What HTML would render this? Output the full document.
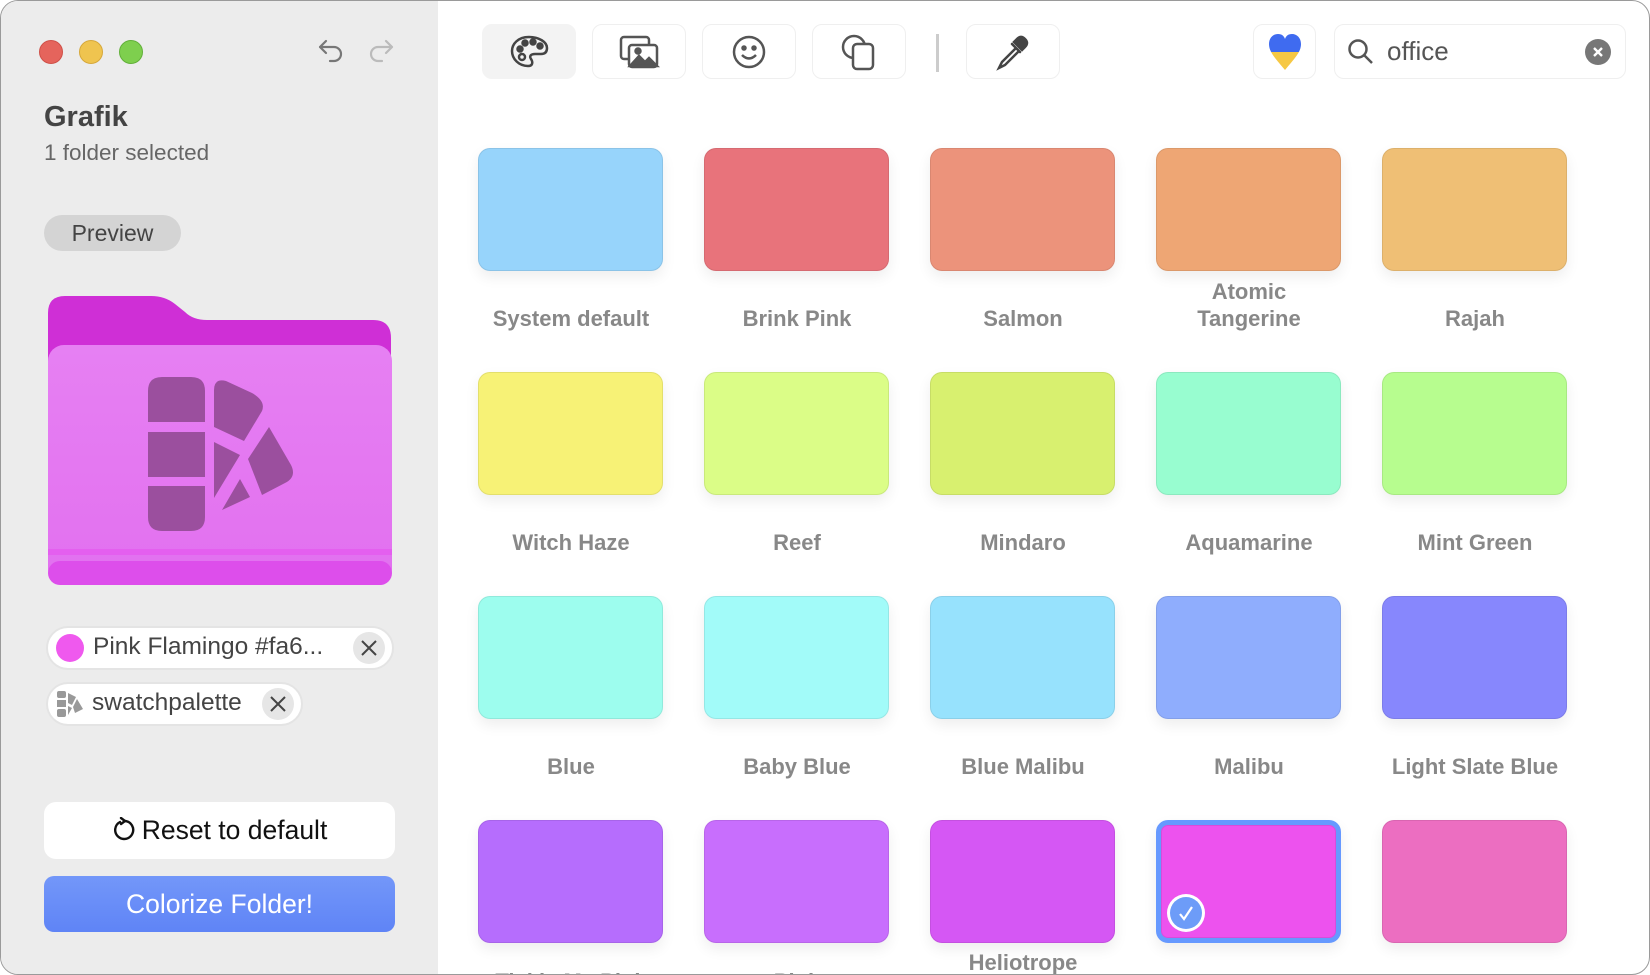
<!DOCTYPE html>
<html><head><meta charset="utf-8"><style>
*{margin:0;padding:0;box-sizing:border-box}
body{width:1650px;height:975px;overflow:hidden;background:#fff;font-family:"Liberation Sans",sans-serif;position:relative}
.win{position:absolute;left:0;top:0;width:1650px;height:975px;border:1.5px solid #9a9a9a;border-radius:18px;overflow:hidden;background:#fff}
.side{position:absolute;left:0;top:0;width:437px;height:100%;background:#ececec}
.a{position:absolute}
.tl{position:absolute;width:24px;height:24px;border-radius:50%;top:39px}
.tb{position:absolute;top:23px;height:55px;border:1.5px solid #efefef;border-radius:10px;background:#fff;display:flex;align-items:center;justify-content:center}
.sw{position:absolute;width:185px;height:123px;border-radius:12px;box-shadow:0 6px 14px rgba(0,0,0,.07),inset 0 0 0 1px rgba(0,0,0,.08)}
.lb{position:absolute;width:230px;text-align:center;font-weight:bold;font-size:22px;color:#888;line-height:27px}
.chip{position:absolute;height:44px;background:#fff;border:2px solid #e4e4e4;border-radius:22px}
.x{position:absolute;width:32px;height:32px;border-radius:50%;background:#e6e6e6;top:4px}
</style></head><body>
<div class="win">
<div class="side">
<div class="tl" style="left:38px;background:#e5645c;border:1px solid #cf5048"></div>
<div class="tl" style="left:78px;background:#efc44f;border:1px solid #d6a83a"></div>
<div class="tl" style="left:118px;background:#7ecf4e;border:1px solid #62b03a"></div>
<svg class="a" style="left:316px;top:36px" width="28" height="28" viewBox="0 0 28 28" fill="none" stroke="#777" stroke-width="2.2" stroke-linecap="round" stroke-linejoin="round"><path d="M9 4 3 10l6 6M3 10h14a7 7 0 0 1 0 14h-4"/></svg>
<svg class="a" style="left:366px;top:36px" width="28" height="28" viewBox="0 0 28 28" fill="none" stroke="#bbb" stroke-width="2.2" stroke-linecap="round" stroke-linejoin="round"><path d="M19 4l6 6-6 6M25 10H11a7 7 0 0 0 0 14h4"/></svg>
<div class="a" style="left:43px;top:100px;font-size:29px;font-weight:bold;color:#444">Grafik</div>
<div class="a" style="left:43px;top:139px;font-size:22.5px;color:#666">1 folder selected</div>
<div class="a" style="left:43px;top:214px;width:137px;height:36px;border-radius:18px;background:#d4d4d4;font-size:23px;color:#444;text-align:center;line-height:36px">Preview</div>
<svg class="a" style="left:44px;top:292px" width="350" height="295" viewBox="44 292 350 295">
<defs><linearGradient id="f" x1="0" y1="0" x2="0" y2="1"><stop offset="0" stop-color="#e680f3"/><stop offset="1" stop-color="#e270ef"/></linearGradient></defs>
<path d="M47 312q0-17 17-17h86q14 0 24 8l10 8q8 8 22 8h166q18 0 18 18v160H47z" fill="#cf2fd6"/>
<rect x="47" y="344" width="344" height="240" rx="16" fill="url(#f)"/>
<rect x="47" y="548" width="344" height="6" fill="#e45fef"/>
<rect x="47" y="560" width="344" height="24" rx="12" fill="#dd4eeb"/>
<g fill="#9b4f9e">
<path d="M147 390q0-14 14-14h29q14 0 14 14v31h-57z"/>
<rect x="147" y="431" width="57" height="45"/>
<path d="M147 485h57v31q0 14-14 14h-29q-14 0-14-14z"/>
<path d="M213 389q0-12 12-9l26 12q14 8 10 18l-18 30-30-14z"/>
<path d="M213 441l26 13-26 43z"/>
<path d="M268 426l22 38q6 12-6 18l-23 12-14-36z"/>
<path d="M239 478l10 18-28 13z"/>
</g></svg>
<div class="chip" style="left:45px;top:625px;width:348px">
<div class="a" style="left:8px;top:6px;width:28px;height:28px;border-radius:50%;background:#ef59ee"></div>
<div class="a" style="left:45px;top:5px;font-size:24.5px;color:#444">Pink Flamingo #fa6...</div>
<div class="x" style="left:305px"><svg width="32" height="32"><path d="M9 9l14 14M23 9 9 23" stroke="#444" stroke-width="2"/></svg></div>
</div>
<div class="chip" style="left:45px;top:681px;width:257px">
<svg class="a" style="left:8px;top:6px" width="28" height="28" viewBox="0 0 28 28" fill="#999"><rect x="1" y="1" width="9" height="7" rx="2"/><rect x="1" y="10" width="9" height="7"/><rect x="1" y="19" width="9" height="8" rx="2"/><path d="M12 3l8 4-4 8-4-2zM12 16l4 2-4 7zM21 9l6 10-8 4-2-6z"/></svg>
<div class="a" style="left:44px;top:5px;font-size:24.5px;color:#444">swatchpalette</div>
<div class="x" style="left:214px"><svg width="32" height="32"><path d="M9 9l14 14M23 9 9 23" stroke="#444" stroke-width="2"/></svg></div>
</div>
<div class="a" style="left:43px;top:801px;width:351px;height:57px;background:#fff;border-radius:12px;font-size:26.5px;color:#111;text-align:center;line-height:57px"><svg style="vertical-align:-4px;margin-right:6px" width="24" height="26" viewBox="0 0 24 26" fill="none" stroke="#111" stroke-width="2.4" stroke-linecap="round"><path d="M8 5a9 9 0 1 0 5-1"/><path d="M9 1l4 3-4 3"/></svg>Reset to default</div>
<div class="a" style="left:43px;top:875px;width:351px;height:56px;background:linear-gradient(#7397f9,#5f84f6);border-radius:10px;font-size:26.5px;color:#fff;text-align:center;line-height:56px">Colorize Folder!</div>
</div>

<div class="tb" style="left:481px;width:94px;background:#f3f3f3;border-color:#f3f3f3">
<svg width="40" height="36" viewBox="0 0 40 36" fill="none" stroke="#444" stroke-width="2.5"><path d="M20 3C9 3 3 10 3 17c0 8 7 15 16 15 5 0 5-4 3-7s0-5 4-5h6c4 0 6-2 6-6C38 8 30 3 20 3z"/><circle cx="11" cy="15" r="2.5" fill="#444"/><circle cx="16" cy="9" r="2.5" fill="#444"/><circle cx="24" cy="8" r="2.5" fill="#444"/><circle cx="31" cy="12" r="2.5" fill="#444"/><circle cx="13" cy="23" r="3"/></svg></div>
<div class="tb" style="left:591px;width:94px"><svg width="42" height="36" viewBox="0 0 42 36" fill="none" stroke="#555" stroke-width="2.5"><rect x="3" y="3" width="28" height="22" rx="3"/><rect x="11" y="11" width="28" height="22" rx="3" fill="#fff"/><path d="M12 32l9-10 6 6 4-4 8 8z" fill="#555"/><circle cx="20" cy="17" r="2.5" fill="#555"/></svg></div>
<div class="tb" style="left:701px;width:94px"><svg width="36" height="36" viewBox="0 0 36 36" fill="none" stroke="#555" stroke-width="2.5"><circle cx="18" cy="18" r="15"/><circle cx="13" cy="14" r="1.5" fill="#555"/><circle cx="23" cy="14" r="1.5" fill="#555"/><path d="M11 21q7 7 14 0"/></svg></div>
<div class="tb" style="left:811px;width:94px"><svg width="40" height="40" viewBox="0 0 40 40" fill="none" stroke="#555" stroke-width="2.5"><circle cx="15" cy="15" r="11"/><rect x="14" y="12" width="20" height="25" rx="4" fill="#fff"/></svg></div>
<div class="a" style="left:935px;top:33px;width:3px;height:38px;background:#ccc"></div>
<div class="tb" style="left:965px;width:94px"><svg width="36" height="38" viewBox="0 0 36 38" fill="none" stroke="#444" stroke-width="2.5" stroke-linecap="round"><path d="M22 6q4-4 8 0t0 8l-3 3-8-8z" fill="#444"/><path d="M17 11l8 8M21 15L7 29l-3 6 6-3 14-14"/></svg></div>
<div class="tb" style="left:1252px;width:63px"><svg width="36" height="40" viewBox="0 0 36 40"><defs><clipPath id="h"><path d="M18 38C8 26 2 20 2 12 2 6 6 2 11 2c4 0 6 2 7 5 1-3 3-5 7-5 5 0 9 4 9 10 0 8-6 14-16 26z"/></clipPath></defs><g clip-path="url(#h)"><rect width="36" height="20" fill="#3f6bf0"/><rect y="20" width="36" height="20" fill="#f6c844"/></g></svg></div>
<div class="tb" style="left:1333px;width:292px;justify-content:flex-start">
<svg style="margin-left:12px" width="28" height="28" viewBox="0 0 28 28" fill="none" stroke="#555" stroke-width="2.5"><circle cx="11" cy="11" r="8.5"/><path d="M17 17l8 8"/></svg>
<span style="margin-left:12px;font-size:26px;color:#555">office</span>
<div class="a" style="left:250px;top:14px;width:26px;height:26px;border-radius:50%;background:#777"><svg width="26" height="26"><path d="M9 9l8 8M17 9l-8 8" stroke="#fff" stroke-width="2.4"/></svg></div>
</div>

<div class="sw" style="left:477px;top:147px;background:#97d4fb"></div>
<div class="sw" style="left:703px;top:147px;background:#e8737b"></div>
<div class="sw" style="left:929px;top:147px;background:#ec937b"></div>
<div class="sw" style="left:1155px;top:147px;background:#eea674"></div>
<div class="sw" style="left:1381px;top:147px;background:#efbf75"></div>
<div class="lb" style="left:455px;top:304px">System default</div>
<div class="lb" style="left:681px;top:304px">Brink Pink</div>
<div class="lb" style="left:907px;top:304px">Salmon</div>
<div class="lb" style="left:1133px;top:277px">Atomic<br>Tangerine</div>
<div class="lb" style="left:1359px;top:304px">Rajah</div>

<div class="sw" style="left:477px;top:371px;background:#f7f276"></div>
<div class="sw" style="left:703px;top:371px;background:#dbfd87"></div>
<div class="sw" style="left:929px;top:371px;background:#d8f06f"></div>
<div class="sw" style="left:1155px;top:371px;background:#98fdd0"></div>
<div class="sw" style="left:1381px;top:371px;background:#b7fd8f"></div>
<div class="lb" style="left:455px;top:528px">Witch Haze</div>
<div class="lb" style="left:681px;top:528px">Reef</div>
<div class="lb" style="left:907px;top:528px">Mindaro</div>
<div class="lb" style="left:1133px;top:528px">Aquamarine</div>
<div class="lb" style="left:1359px;top:528px">Mint Green</div>

<div class="sw" style="left:477px;top:595px;background:#9dfdee"></div>
<div class="sw" style="left:703px;top:595px;background:#a2fbf9"></div>
<div class="sw" style="left:929px;top:595px;background:#97e2fd"></div>
<div class="sw" style="left:1155px;top:595px;background:#8fadfd"></div>
<div class="sw" style="left:1381px;top:595px;background:#8787fd"></div>
<div class="lb" style="left:455px;top:752px">Blue</div>
<div class="lb" style="left:681px;top:752px">Baby Blue</div>
<div class="lb" style="left:907px;top:752px">Blue Malibu</div>
<div class="lb" style="left:1133px;top:752px">Malibu</div>
<div class="lb" style="left:1359px;top:752px">Light Slate Blue</div>

<div class="sw" style="left:477px;top:819px;background:#b66dfd"></div>
<div class="sw" style="left:703px;top:819px;background:#c86efd"></div>
<div class="sw" style="left:929px;top:819px;background:#d557f4"></div>
<div class="sw" style="left:1155px;top:819px;background:#ed52ee;border:5px solid #6699ff"><div class="a" style="left:6px;top:69px;width:38px;height:38px;border-radius:50%;background:#fff;padding:3px"><div style="width:32px;height:32px;border-radius:50%;background:#6d9cf8"><svg width="32" height="32"><path d="M10 17l4 5 8-12" fill="none" stroke="#fff" stroke-width="2.2"/></svg></div></div></div>
<div class="sw" style="left:1381px;top:819px;background:#ec6ec1"></div>
<div class="lb" style="left:455px;top:967px">Tickle Me Pink</div>
<div class="lb" style="left:681px;top:967px">Pink</div>
<div class="lb" style="left:907px;top:948px">Heliotrope</div>
</div>
</body></html>
